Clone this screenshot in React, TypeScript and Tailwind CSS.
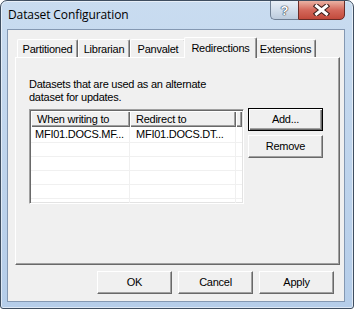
import React from 'react';

const tabs = ['Partitioned', 'Librarian', 'Panvalet', 'Redirections', 'Extensions'];
const tabWidths: Record<string, string> = {
  Partitioned: 'w-[61px]',
  Librarian: 'w-[52px]',
  Panvalet: 'w-[56px]',
  Redirections: 'w-[73px]',
  Extensions: 'w-[61px]',
};

const rows = [
  { from: 'MFI01.DOCS.MF...', to: 'MFI01.DOCS.DT...' },
  { from: '', to: '' },
  { from: '', to: '' },
  { from: '', to: '' },
  { from: '', to: '' },
  { from: '', to: '' },
];

const raised =
  'bg-[#f0f0f0] border border-t-white border-l-white border-r-[#696969] border-b-[#696969] shadow-[inset_-1px_-1px_#a0a0a0]';

const ClassicButton: React.FC<{ label: string; isDefault?: boolean }> = ({ label, isDefault }) => (
  <button
    className={
      isDefault
        ? 'w-[75px] h-[23px] bg-[#f0f0f0] border border-black shadow-[inset_1px_1px_white,inset_-1px_-1px_#696969,inset_-2px_-2px_#a0a0a0] text-[11px] text-black flex items-center justify-center'
        : `w-[75px] h-[23px] ${raised} text-[11px] text-black flex items-center justify-center`
    }
  >
    {label}
  </button>
);

export default function App() {
  return (
    <div className="w-[354px] h-[309px] flex flex-col border border-[#3f4e60] rounded-t-[7px] rounded-b-[3px] bg-gradient-to-b from-[#c9dcf0] to-[#b5cde9] shadow-[inset_0_0_0_1px_rgba(255,255,255,0.55)] pl-[6px] pr-[8px] pb-[6px] font-['Liberation_Sans',Arial,sans-serif] text-black overflow-hidden">
      {/* Title bar */}
      <div className="h-[28px] flex items-start">
        <span className="self-center pl-[1px] text-[12px] font-['Open_Sans',sans-serif] tracking-[-0.1px]">
          Dataset Configuration
        </span>
        <div className="ml-auto mt-[-1px] flex">
          <div className="w-[28px] h-[20px] rounded-bl-[5px] border border-[#6f7f94] border-r-0 bg-gradient-to-b from-[#e9eff6] via-[#d3deeb] to-[#bccbdd] flex items-center justify-center">
            <span className="text-[13px] font-bold text-white leading-none [text-shadow:0_0_1px_#2b3645,0_0_1px_#2b3645,0_0_1px_#2b3645]">
              ?
            </span>
          </div>
          <div className="w-[47px] h-[20px] rounded-br-[5px] border border-[#6a2c27] bg-gradient-to-b from-[#eab2a4] via-[#d4685b] to-[#c24a3c] flex items-center justify-center">
            <svg width="17" height="12" viewBox="0 0 17 12">
              <path d="M3.5 2 L13.5 10 M13.5 2 L3.5 10" stroke="#3b1e1c" strokeWidth="5" strokeLinecap="square" />
              <path d="M3.5 2 L13.5 10 M13.5 2 L3.5 10" stroke="#ffffff" strokeWidth="3" strokeLinecap="square" />
            </svg>
          </div>
        </div>
      </div>

      {/* Client area */}
      <div className="flex-1 flex flex-col bg-[#f0f0f0] border border-[#8498b2] pl-[7px] pr-[4px] pt-[7px] text-[11px] tracking-[-0.25px]">
        {/* Tabs */}
        <div className="h-[20px] flex items-end pl-[2px]">
          {tabs.map((t) => {
            const selected = t === 'Redirections';
            return selected ? (
              <div
                key={t}
                className={`${tabWidths[t]} h-[21px] mb-[-1px] mx-[-2px] relative z-10 bg-[#f0f0f0] border-t border-l border-white border-r border-r-[#696969] shadow-[inset_-1px_0_#a0a0a0] rounded-t-[2px] flex items-start justify-center pt-[2px]`}
              >
                {t}
              </div>
            ) : (
              <div
                key={t}
                className={`${tabWidths[t]} h-[18px] border-t border-l border-white border-r border-r-[#696969] shadow-[inset_-1px_0_#a0a0a0] rounded-t-[2px] flex items-center justify-center pt-[1px]`}
              >
                {t}
              </div>
            );
          })}
        </div>

        {/* Tab panel */}
        <div className="h-[208px] border border-t-white border-l-white border-r-[#696969] border-b-[#696969] shadow-[inset_-1px_-1px_#a0a0a0] pl-[13px] pt-[20px]">
          <p className="leading-[13px]">
            Datasets that are used as an alternate
            <br />
            dataset for updates.
          </p>
          <div className="flex items-start mt-[4px]">
            {/* List view */}
            <div className="mt-[1px] w-[215px] h-[95px] bg-white border border-t-[#a0a0a0] border-l-[#a0a0a0] border-r-white border-b-white shadow-[inset_1px_1px_#696969,inset_-1px_-1px_#e3e3e3] p-[1px] overflow-hidden">
              <div className="flex h-[16px]">
                <div className="w-[99px] h-full bg-[#f0f0f0] shadow-[inset_1px_1px_white,inset_-1px_-1px_#696969,inset_-2px_-2px_#a0a0a0] pl-[6px] flex items-center">
                  When writing to
                </div>
                <div className="w-[106px] h-full bg-[#f0f0f0] shadow-[inset_1px_1px_white,inset_-1px_-1px_#696969,inset_-2px_-2px_#a0a0a0] pl-[6px] flex items-center">
                  Redirect to
                </div>
                <div className="flex-1 h-full bg-[#f0f0f0] shadow-[inset_1px_1px_white,inset_-1px_-1px_#696969,inset_-2px_-2px_#a0a0a0]" />
              </div>
              {rows.map((r, i) => (
                <div key={i} className={`flex border-b border-[#f0f0f0] ${i === 0 ? 'h-[16px]' : 'h-[14px]'}`}>
                  <div className="w-[99px] h-full border-r border-[#f0f0f0] pl-[4px] flex items-center whitespace-nowrap">
                    {r.from}
                  </div>
                  <div className="w-[106px] h-full border-r border-[#f0f0f0] pl-[6px] flex items-center whitespace-nowrap">
                    {r.to}
                  </div>
                  <div className="flex-1" />
                </div>
              ))}
            </div>

            {/* Side buttons */}
            <div className="ml-[4px] flex flex-col gap-[4px]">
              <ClassicButton label="Add..." isDefault />
              <ClassicButton label="Remove" />
            </div>
          </div>
        </div>

        {/* Dialog buttons */}
        <div className="mt-[6px] flex justify-end gap-[6px] pr-[6px]">
          <ClassicButton label="OK" />
          <ClassicButton label="Cancel" />
          <ClassicButton label="Apply" />
        </div>
      </div>
    </div>
  );
}
